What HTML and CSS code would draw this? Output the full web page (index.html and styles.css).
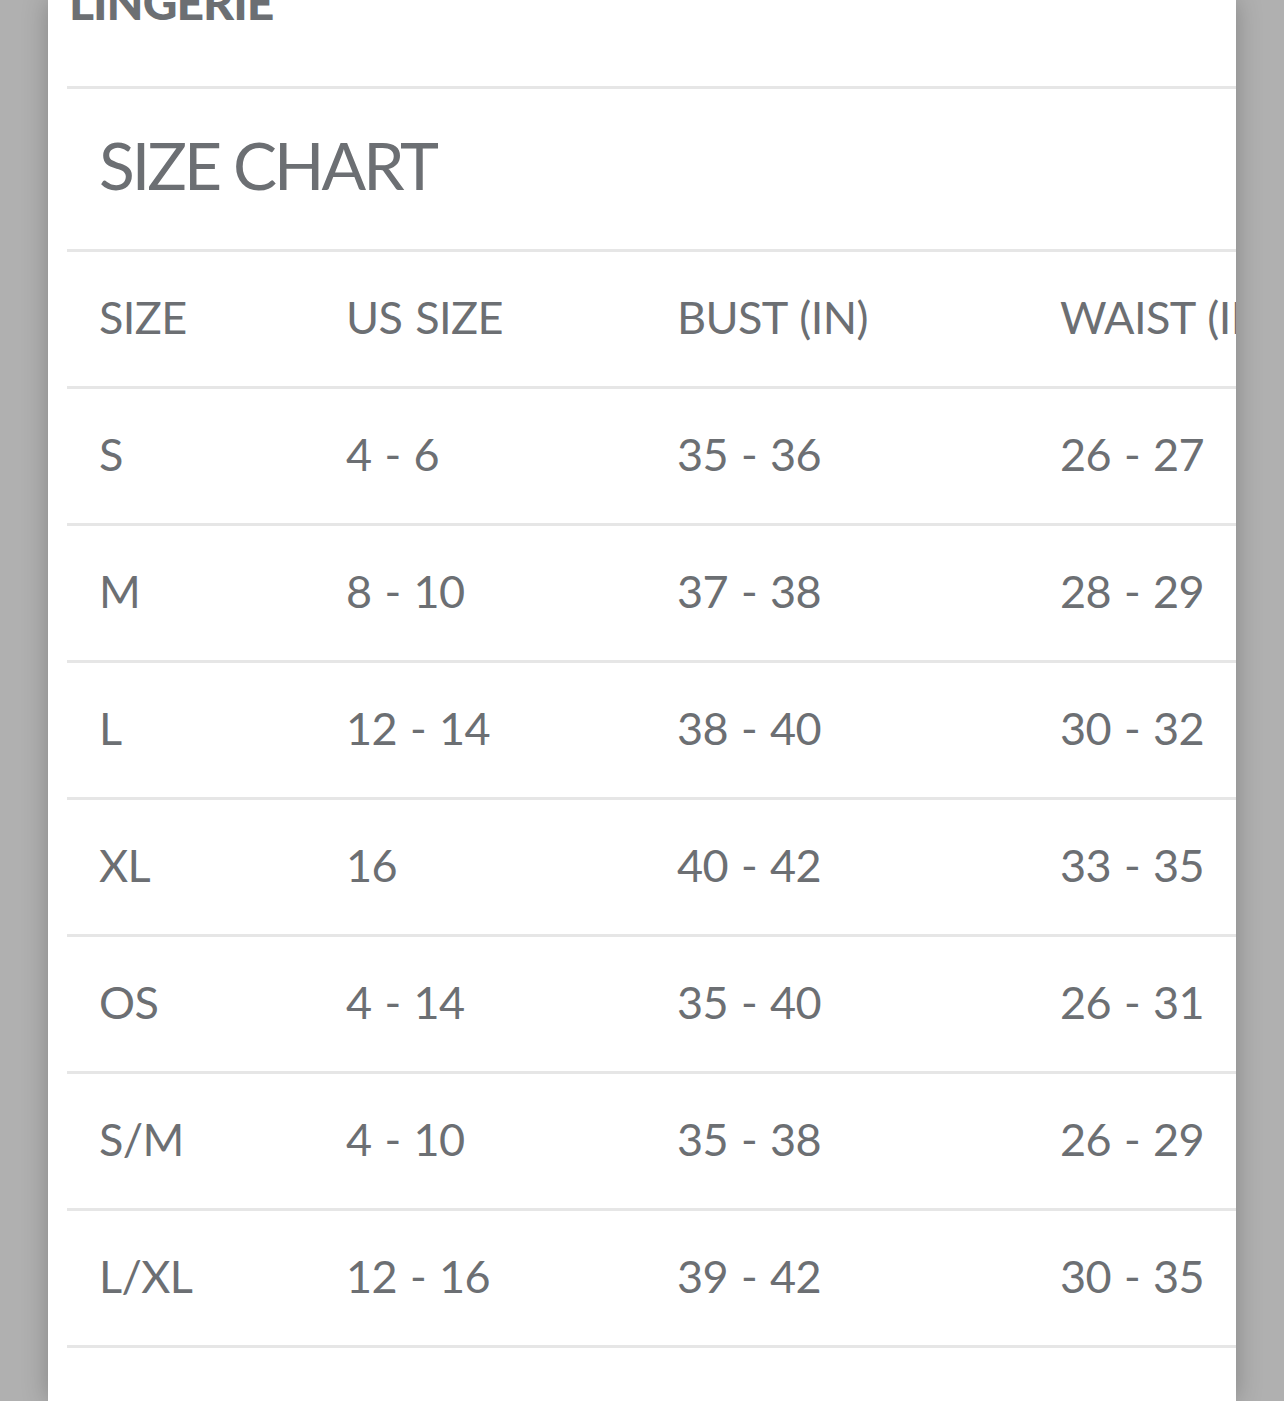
FILE: index.html
```html
<!DOCTYPE html>
<html>
<head>
<meta charset="utf-8">
<link rel="stylesheet" href="styles.css">
</head>
<body>
<div class="page">
  <div class="panel">
    <div class="brand">LINGERIE</div>
    <div class="title-row"><h1 class="title">SIZE CHART</h1></div>
    <div class="table">
      <div class="row head"><span>SIZE</span><span>US SIZE</span><span>BUST (IN)</span><span>WAIST (IN)</span></div>
      <div class="row"><span>S</span><span>4 - 6</span><span>35 - 36</span><span>26 - 27</span></div>
      <div class="row"><span>M</span><span>8 - 10</span><span>37 - 38</span><span>28 - 29</span></div>
      <div class="row"><span>L</span><span>12 - 14</span><span>38 - 40</span><span>30 - 32</span></div>
      <div class="row"><span>XL</span><span>16</span><span>40 - 42</span><span>33 - 35</span></div>
      <div class="row"><span>OS</span><span>4 - 14</span><span>35 - 40</span><span>26 - 31</span></div>
      <div class="row"><span>S/M</span><span>4 - 10</span><span>35 - 38</span><span>26 - 29</span></div>
      <div class="row"><span>L/XL</span><span>12 - 16</span><span>39 - 42</span><span>30 - 35</span></div>
    </div>
  </div>
</div>
</body>
</html>
```
FILE: styles.css
```css
html, body {
  margin: 0;
  padding: 0;
}
body {
  background: #b0b0b0;
  height: 1401px;
  overflow: hidden;
  font-family: "Lato", "Open Sans", sans-serif;
  color: #6c6f73;
}
.page {
  display: flex;
  height: 1401px;
}
.panel {
  margin-left: 48px;
  width: 1188px;
  height: 1401px;
  background: #ffffff;
  overflow: hidden;
  box-shadow: 0 0 24px rgba(0,0,0,0.25);
  padding-left: 19px;
  box-sizing: border-box;
}
.brand {
  margin-top: -17px;
  height: 106px;
  box-sizing: border-box;
  padding-left: 2px;
  font-weight: 900;
  font-size: 48px;
  line-height: 37px;
  letter-spacing: -1px;
  color: #6c6f73;
  border-bottom: 3px solid #e6e6e6;
}
.title-row {
  height: 163px;
  box-sizing: border-box;
  border-bottom: 3px solid #e6e6e6;
  display: flex;
  align-items: center;
  padding-left: 32px;
}
.title {
  margin: 0;
  margin-top: -10px;
  font-weight: 400;
  font-size: 66px;
  letter-spacing: -3px;
  color: #6c6f73;
}
.row {
  display: grid;
  grid-template-columns: 247px 331px 383px 400px;
  align-items: center;
  height: 137px;
  box-sizing: border-box;
  border-bottom: 3px solid #e6e6e6;
  padding-left: 32px;
  font-size: 45px;
  letter-spacing: -0.6px;
  word-spacing: 2px;
  white-space: nowrap;
}
.row span {
  padding-bottom: 5px;
}
```
